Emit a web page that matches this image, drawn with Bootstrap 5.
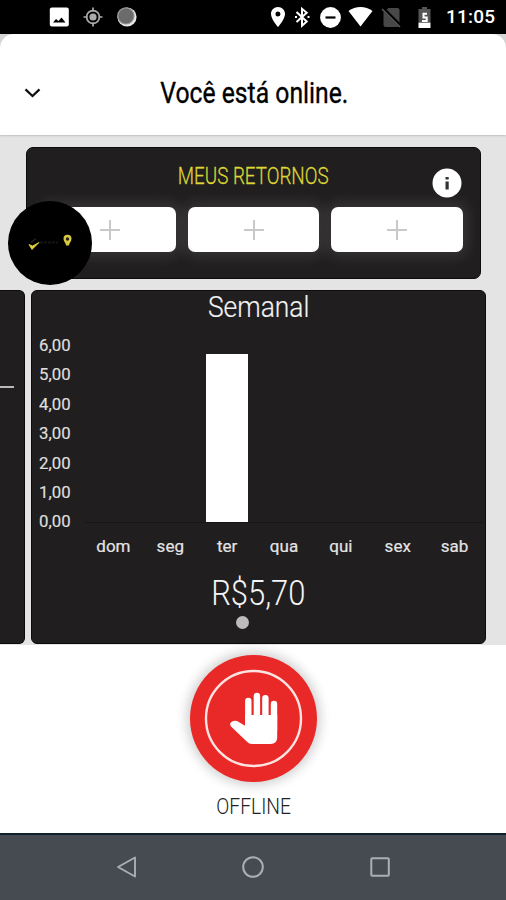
<!DOCTYPE html>
<html lang="pt-BR">
<head>
<meta charset="utf-8">
<meta name="viewport" content="width=device-width, initial-scale=1">
<title>Você está online.</title>
<link href="https://cdn.jsdelivr.net/npm/bootstrap@5.3.0/dist/css/bootstrap.min.css" rel="stylesheet">
<style>
html,body{height:100%}
body{font-family:Roboto,"Liberation Sans",sans-serif;overflow:hidden;background:#e4e4e4}
.phone{width:506px;height:900px}
.status{height:34px;background:#000;padding-left:49px;padding-right:10px}
.status svg{height:24px;flex:none}
.clock{font-size:19px;font-weight:500;line-height:36px;letter-spacing:.2px;width:50px;margin-left:6px;white-space:nowrap}
.topwrap{background:#d6d6d6;height:101px}
.topbar{height:101px;border-radius:14px 14px 0 0;box-shadow:0 1px 2px rgba(0,0,0,.16);padding-top:17px;padding-left:2px}
.slim{display:inline-block;white-space:nowrap;transform-origin:center}
.headline{font-size:29px;line-height:36px;font-weight:400;color:#000;-webkit-text-stroke:.35px #000;transform:scaleX(.853)}
.content{height:510px;padding-top:12px}
.panel{background:#201e1f;border:1px solid #0b0b0b;border-radius:7px}
.returns{width:455px;height:132px;margin-left:26px;padding:0 17px}
.returns-head{height:59px;padding-top:13px}
.returns-title{color:#dcd535;font-size:23.5px;line-height:30px;font-weight:300;-webkit-text-stroke:.3px #dcd535;transform:scaleX(.8)}
.info-btn{right:1px;top:20px;width:30px;height:30px}
.slot{height:45px;border-radius:7px;box-shadow:0 0 14px 5px rgba(255,255,255,.1)}
.bubble{left:8px;top:201px;width:84px;height:84px;z-index:5}
.slides{height:354px;margin-top:11px;gap:6px}
.prev-slide{width:25px;border-radius:0 6px 6px 0;padding-top:95px}
.prev-slide hr{width:14px;height:2px;background:#b9b9b9;opacity:1;border:0}
.week{width:455px;border-radius:6px}
.week-title{font-size:29.5px;line-height:32px;font-weight:300;color:#f2f2f2;-webkit-text-stroke:.2px #f2f2f2;transform:scaleX(.895)}
.chart{height:243px;margin-top:7px;padding-left:7px}
.scale{width:46px;font-size:16.8px;color:#dedede;-webkit-text-stroke:.2px #dedede}
.scale div{height:29.4px;line-height:29.4px}
.plot{width:398px}
.bars{height:192px;border-bottom:1px solid #171516}
.bar{width:42px;background:#fff}
.days{font-size:17px;line-height:24px;padding-top:11px;color:#e4e4e4;-webkit-text-stroke:.2px #e4e4e4}
.total{font-size:35px;line-height:40px;font-weight:300;color:#f4f4f4;transform:scaleX(.885)}
.dot{width:13px;height:13px;background:#bcbcbc;margin:2px 0 0 204px}
.actions{height:188px;padding-top:10px}
.stop{width:127px;height:127px;background:#e92828;border:0;box-shadow:0 0 12px 3px rgba(0,0,0,.2)}
.offline{font-size:22.5px;line-height:28px;font-weight:300;color:#222;margin:10px 0 0 2px;transform:scaleX(.855)}
.softkeys{height:67px;background:#454b51;border-top:2px solid #10202b;padding:0 63px 2px 64px}
</style>
</head>
<body>
<div class="phone d-flex flex-column position-relative overflow-hidden">
  <div class="status d-flex align-items-center text-white flex-shrink-0">
    <div class="d-flex align-items-center me-auto" style="gap:14px">
      <svg width="20" viewBox="0 0 20 20"><rect x=".8" y=".5" width="19" height="19" rx="2" fill="#fff"/><path d="M4 15.500l3-3.500 2.500 2 3-3.500 4 5z" fill="#000"/></svg>
      <svg width="20" viewBox="0 0 20 20" fill="none" stroke="#aaa" stroke-width="1.700"><circle cx="10" cy="10" r="6.400"/><circle cx="10" cy="10" r="3.600" fill="#aaa" stroke="none"/><path d="M10 .5v4M10 15.500v4M.5 10h4M15.500 10h4"/></svg>
      <svg width="20" viewBox="0 0 20 20"><circle cx="10" cy="10" r="9.600" fill="#e8e8e8"/><circle cx="8.900" cy="8.900" r="8.700" fill="#999"/><circle cx="9" cy="9" r="7.500" fill="#6b6b6b"/></svg>
    </div>
    <svg width="24" viewBox="0 0 24 24" fill="#fff"><path d="M12 2C8.130 2 5 5.130 5 9c0 5.250 7 13 7 13s7-7.750 7-13c0-3.870-3.130-7-7-7zm0 9.500a2.500 2.500 0 1 1 0-5 2.500 2.500 0 0 1 0 5z"/></svg>
    <svg width="24" viewBox="0 0 24 24" fill="none" stroke="#fff" stroke-width="2"><path d="M6.500 7l10.200 9.500-4.700 4.200V3.800l4.700 4L6.500 17"/><path d="M5 12h2M17.500 12h2" stroke-width="2"/></svg>
    <svg width="33" viewBox="0 0 24 24"><circle cx="12" cy="12.500" r="10.400" fill="#fff"/><path d="M7 12.500h10" stroke="#000" stroke-width="2.200"/></svg>
    <svg width="27" viewBox="0 0 24 24" fill="#fff"><path d="M0 6C7 .8 17 .8 24 6L12 21.500z"/></svg>
    <svg width="35" viewBox="0 0 24 24"><path d="M9 3h9q2 0 2 2v15q0 2-2 2H6q-2 0-2-2V7z" fill="#484848"/><path d="M3 3l18 18" stroke="#000" stroke-width="3.500"/><path d="M2.500 4L20.500 22" stroke="#5c5c5c" stroke-width="1.400"/></svg>
    <svg width="31" viewBox="0 0 24 24"><path d="M9.500 2h5v2H18v13H6V4h3.500z" fill="#555"/><path d="M6 17.500h12v5.500H6z" fill="#fff"/><path d="M14.500 8.800H11v3.600h3.200v3.600H9.500" fill="none" stroke="#fff" stroke-width="2"/></svg>
    <div class="clock">11:05</div>
  </div>

  <header class="topwrap flex-shrink-0 position-relative">
    <div class="topbar bg-white d-flex align-items-center justify-content-center position-relative">
      <svg class="position-absolute start-0 ms-4" width="18" height="12" viewBox="0 0 18 12" fill="none" stroke="#111" stroke-width="2.300"><path d="M1.500 2.300L8.500 9l7-6.700"/></svg>
      <h1 class="slim headline m-0">Você está online.</h1>
    </div>
  </header>

  <main class="content flex-shrink-0">
    <section class="panel returns">
      <div class="returns-head text-center position-relative">
        <div class="slim returns-title">MEUS RETORNOS</div>
        <svg class="info-btn position-absolute" viewBox="0 0 30 30"><circle cx="15" cy="15" r="14.500" fill="#fff"/><path d="M13.500 9h3.200v2.500h-3.200zM13.500 13.500h3.200v8h-3.200z" fill="#333"/></svg>
      </div>
      <div class="row g-0 flex-nowrap" style="column-gap:12px">
        <div class="col slot bg-white d-flex align-items-center justify-content-center"><svg width="20" height="20" stroke="#c9c9c9" stroke-width="2"><path d="M0 10h20M10 0v20"/></svg></div>
        <div class="col slot bg-white d-flex align-items-center justify-content-center"><svg width="20" height="20" stroke="#c9c9c9" stroke-width="2"><path d="M0 10h20M10 0v20"/></svg></div>
        <div class="col slot bg-white d-flex align-items-center justify-content-center"><svg width="20" height="20" stroke="#c9c9c9" stroke-width="2"><path d="M0 10h20M10 0v20"/></svg></div>
      </div>
    </section>

    <div class="slides d-flex">
      <section class="panel prev-slide border-start-0 flex-shrink-0"><hr class="m-0"></section>
      <section class="panel week flex-shrink-0 text-center">
        <div class="slim week-title">Semanal</div>
        <div class="chart d-flex text-start">
          <div class="scale flex-shrink-0"><div>6,00</div><div>5,00</div><div>4,00</div><div>3,00</div><div>2,00</div><div>1,00</div><div>0,00</div></div>
          <div class="plot flex-shrink-0">
            <div class="bars row g-0 align-items-end">
              <div class="col"></div><div class="col"></div>
              <div class="col"><div class="bar mx-auto" style="height:168px"></div></div>
              <div class="col"></div><div class="col"></div><div class="col"></div><div class="col"></div>
            </div>
            <div class="days row g-0 text-center"><div class="col">dom</div><div class="col">seg</div><div class="col">ter</div><div class="col">qua</div><div class="col">qui</div><div class="col">sex</div><div class="col">sab</div></div>
          </div>
        </div>
        <div><span class="slim total">R$5,70</span></div>
        <div class="dot rounded-circle"></div>
      </section>
    </div>
  </main>

  <footer class="actions bg-white d-flex flex-column align-items-center flex-shrink-0">
    <button class="stop rounded-circle p-0" aria-label="Ficar offline">
      <svg width="127" height="127" viewBox="0 0 127 127"><circle cx="63.500" cy="63.500" r="47.500" fill="none" stroke="#ffe3e0" stroke-width="2.400"/><g stroke="#fff" stroke-linecap="round" fill="none" stroke-width="6.400"><path d="M58.300 46v24M66.900 41v28M75.400 43.300v26M84 49v26"/></g><path d="M55.100 60h32.100v22.500q0 6.500-6.500 6.500H62q-3 0-5-2.200L41 71.500q-1.800-2.500 0-4.200 2.500-2.300 6-1.200l8.100 4.600z" fill="#fff"/></svg>
    </button>
    <div class="slim offline">OFFLINE</div>
  </footer>

  <nav class="softkeys row g-0 align-items-center text-center flex-shrink-0" aria-label="Sistema">
    <div class="col"><svg width="24" height="24" viewBox="0 0 24 24" fill="none" stroke="#a9afb2" stroke-width="1.900"><path d="M20 2.500v19L3 12z" stroke-linejoin="round"/></svg></div>
    <div class="col"><svg width="24" height="24" viewBox="0 0 24 24" fill="none" stroke="#a9afb2" stroke-width="2"><circle cx="12" cy="12" r="9.800"/></svg></div>
    <div class="col"><svg width="24" height="24" viewBox="0 0 24 24" fill="none" stroke="#a9afb2" stroke-width="2"><rect x="3.300" y="3.300" width="17.500" height="17.500" rx="1"/></svg></div>
  </nav>

  <div class="bubble bg-black rounded-circle position-absolute d-flex align-items-center justify-content-center">
    <svg width="48" height="20" viewBox="0 0 48 20"><path d="M3 11.500l3.500 1.500 6.500-3.500-7 7z" fill="#e3d63d" stroke="#e3d63d" stroke-width=".8"/><path d="M5 9.500l5-4" stroke="#222" stroke-width="1.500"/><path d="M14 9.500h18" stroke="#151515" stroke-width="2" stroke-dasharray="3 1"/><path d="M41.500 1.800a4 4 0 0 0-4 4c0 3 2.500 4 2.500 6.800h3c0-2.800 2.500-3.800 2.500-6.800a4 4 0 0 0-4-4z" fill="#d9c93e"/><circle cx="41.500" cy="6" r="1.700" fill="#222"/></svg>
  </div>
</div>
<script src="https://cdn.jsdelivr.net/npm/bootstrap@5.3.0/dist/js/bootstrap.bundle.min.js"></script>
</body>
</html>
